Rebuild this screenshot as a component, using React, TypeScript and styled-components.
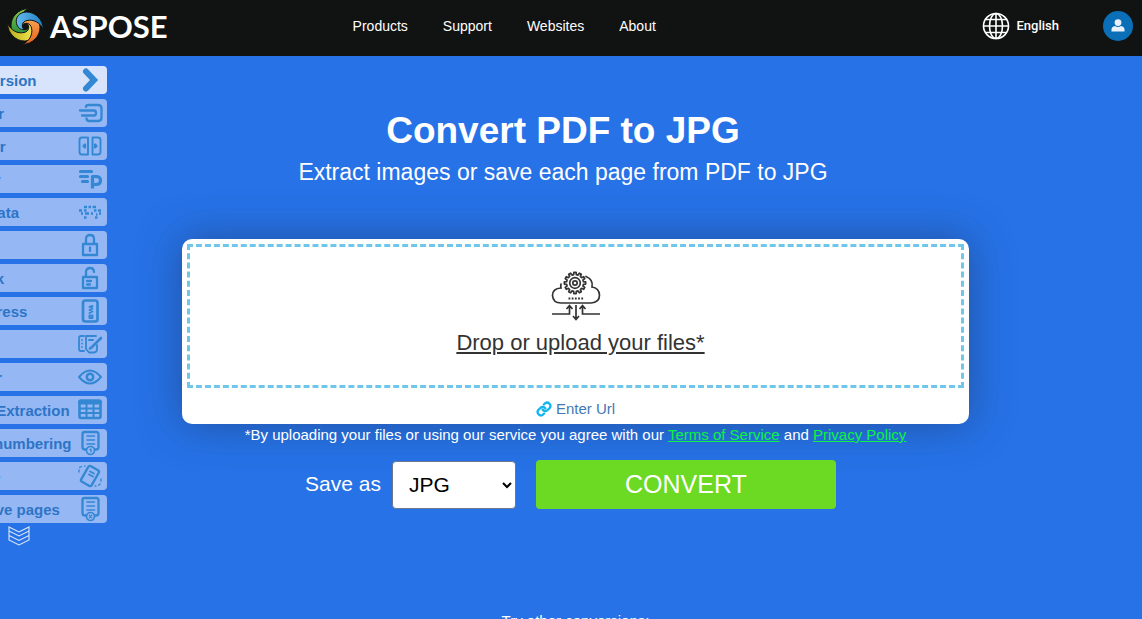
import React from "react";
import styled, { createGlobalStyle } from "styled-components";

const GlobalStyle = createGlobalStyle`
  * { box-sizing: border-box; }
  html { scrollbar-width: none; }
  body {
    margin: 0;
    background: #2672e6;
    color: #fff;
    font-family: "Liberation Sans", Arial, sans-serif;
    font-size: 14px;
    overflow-x: hidden;
  }
`;

const Header = styled.header`
  display: flex;
  align-items: center;
  height: 56px;
  padding: 0 9px 4px 7px;
  background: #111312;
`;

const Logo = styled.a`
  display: flex;
  align-items: center;
  gap: 6px;
  color: #fff;
  text-decoration: none;
  font-family: Lato, sans-serif;
  font-size: 31px;
  font-weight: 700;
  line-height: 36px;
`;

const Nav = styled.nav`
  display: flex;
  gap: 35px;
  margin-left: 185px;
`;

const NavLink = styled.a`
  color: #fff;
  text-decoration: none;
  line-height: 20px;
`;

const Language = styled.button`
  display: flex;
  align-items: center;
  gap: 7px;
  margin-left: auto;
  padding: 0;
  border: 0;
  background: none;
  color: #fff;
  font: 500 13px/20px Roboto, sans-serif;
`;

const Account = styled.button`
  display: grid;
  place-items: center;
  width: 30px;
  height: 30px;
  margin-left: 44px;
  padding: 0;
  border: 0;
  border-radius: 50%;
  background: #0a6fb7;
`;

const Sidebar = styled.nav`
  position: fixed;
  top: 66px;
  left: -56px;
  z-index: 2;
  display: flex;
  flex-direction: column;
  gap: 5px;
  width: 163px;
`;

const SideLink = styled.a<{ $active?: boolean }>`
  display: flex;
  align-items: center;
  justify-content: space-between;
  height: 28px;
  padding: 0 4px 0 10px;
  border-radius: 4px;
  background: ${(p) => (p.$active ? "#d7e4fb" : "#95b8f4")};
  color: #2d74c6;
  font-size: 15px;
  font-weight: 700;
  line-height: 20px;
  white-space: nowrap;
  text-decoration: none;
`;

const SideLabel = styled.span`
  padding-top: 2px;
`;

const SideIcon = styled.svg`
  flex: none;
  width: 26px;
  height: 26px;
  fill: none;
  stroke: #3487d3;
  stroke-width: 2.3;
  stroke-linecap: round;
  stroke-linejoin: round;
`;

const More = styled.button`
  align-self: flex-start;
  display: block;
  margin: -2px 0 0 64px;
  padding: 0;
  border: 0;
  background: none;
  line-height: 0;
`;

const Main = styled.main`
  display: flex;
  flex-direction: column;
  align-items: center;
  padding: 51px 0 24px 9px;
`;

const Intro = styled.div`
  padding-right: 25px;
  text-align: center;
`;

const Title = styled.h1`
  margin: 0;
  font-size: 37px;
  font-weight: 700;
  line-height: 48px;
`;

const Subtitle = styled.h2`
  margin: 0;
  font-size: 23px;
  font-weight: 400;
  line-height: 34px;
`;

const Card = styled.section`
  width: 100%;
  max-width: 787px;
  margin-top: 50px;
  padding: 5px;
  border-radius: 10px;
  background: #fff;
  box-shadow: 0 0 40px rgba(30, 50, 90, 0.5);
  text-align: center;
`;

const DropZone = styled.button`
  display: flex;
  flex-direction: column;
  align-items: center;
  width: 100%;
  height: 144px;
  padding: 24px 0 0;
  border: 3px dashed #6ec6ea;
  background: #fff;
  color: #333;
  font: 400 22px/28px "Liberation Sans", Arial, sans-serif;
`;

const DropLabel = styled.span`
  margin-top: 8px;
  padding-left: 10px;
  text-decoration: underline;
`;

const UrlRow = styled.div`
  display: flex;
  justify-content: center;
  height: 31px;
  padding-top: 11px;
`;

const UrlLink = styled.a`
  display: flex;
  align-items: center;
  gap: 4px;
  color: #4379b5;
  font-size: 15px;
  line-height: 20px;
  text-decoration: none;
`;

const Terms = styled.p`
  margin: 0;
  font-size: 15px;
  line-height: 22px;
  a { color: #0cf443; }
`;

const SaveRow = styled.form`
  display: flex;
  align-items: center;
  margin-top: 14px;
  padding-right: 10px;
  font-size: 21px;
  label { padding-bottom: 2px; }
`;

const FormatSelect = styled.select`
  width: 124px;
  height: 48px;
  margin: 0 20px 0 11px;
  padding: 0 0 0 12px;
  border: 1px solid #6b7690;
  border-radius: 4px;
  background: #fff;
  color: #000;
  font: 400 21px "Liberation Sans", Arial, sans-serif;
`;

const ConvertButton = styled.button`
  width: 300px;
  height: 49px;
  padding: 0;
  border: 0;
  border-radius: 4px;
  background: #6cd923;
  color: #fff;
  font: 400 25px "Liberation Sans", Arial, sans-serif;
`;

const Other = styled.p`
  margin: 101px 0 0;
  font-size: 15px;
  line-height: 22px;
`;

const blade = "M18 3C17.500 -7 10 -14.500 1 -14.500C-6 -14.500 -10.500 -9 -9 -3C-8 1 -5 3.500 -1.500 3C-4.500 0 -3.500 -5 1.500 -6C8 -7.500 14.500 -4 18 3Z";

const Swirl = () => (
  <svg width="37" height="37" viewBox="-18.5 -18.5 37 37" aria-hidden="true">
    <defs>
      {[
        ["green", "#1f8a3c", "#8ccb4a"],
        ["blue", "#67b9ee", "#1d7fc4"],
        ["orange", "#f7a552", "#e8641f"],
        ["yellow", "#f3e94f", "#b9ac1c"],
      ].map(([id, a, b]) => (
        <linearGradient key={id} id={id}>
          <stop offset="0" stopColor={a} />
          <stop offset="1" stopColor={b} />
        </linearGradient>
      ))}
    </defs>
    <g stroke="#111312" strokeWidth="1">
      <path d={blade} fill="url(#green)" transform="rotate(-90)" />
      <path d={blade} fill="url(#yellow)" transform="rotate(180)" />
      <path d={blade} fill="url(#orange)" transform="rotate(90)" />
      <path d={blade} fill="url(#blue)" />
    </g>
  </svg>
);

const page = (
  <>
    <path d="M18 19.500H19Q21.500 19.500 21.500 17V4Q21.500 2 19.500 2H7.500Q5.500 2 5.500 4V17Q5.500 19.500 8 19.500H9" />
    <path d="M10 6H17.500M10 10H17.500M10 14H17.500" strokeWidth="1.600" />
    <circle cx="13.500" cy="20.500" r="4" strokeWidth="1.700" />
  </>
);

const tools: { name: string; icon: React.ReactNode }[] = [
  { name: "Conversion", icon: <path d="M9 4.500L17 13L9 21.500" strokeWidth="6" strokeLinejoin="miter" /> },
  { name: "Merger", icon: <path d="M9 7Q9 5 11.500 5H21Q24.500 5 24.500 8.500V17.500Q24.500 21 21 21H12.500Q9.500 21 9.500 18.500M3 10.500H17Q19 10.500 19 13Q19 15.500 17 15.500H5" /> },
  { name: "Splitter", icon: <><path d="M10 4.500H5Q2.500 4.500 2.500 7V19Q2.500 21.500 5 21.500H10M16 4.500H21Q23.500 4.500 23.500 7V19Q23.500 21.500 21 21.500H16M11 4.500V21.500M15.500 4.500V21.500" strokeWidth="1.900" /><path d="M8 11.500V14.500L6.500 13ZM18 11.500V14.500L19.500 13Z" /></> },
  { name: "Parser", icon: <><path d="M3.500 5.500H14.500M3.500 10.500H10.500M5.500 15.500H10.500" strokeWidth="3.200" /><path d="M15.500 22.500V10.500H19Q23.500 10.500 23.500 14.500Q23.500 18.500 19 18.500H15.500" strokeWidth="3.200" strokeLinecap="butt" /></> },
  { name: "Metadata", icon: <path d="M7 8H10M11.500 8H14M15.500 8H19M2 11.500H5M7 11.500H9.500M17 11.500H19.500M21 11.500H24M4 14.500H6M8 14.500H12M14 14.500H16M22 14.500H24M7 18.500H9.500M18 18.500H20.500M19 15.500H20.500" strokeWidth="2.700" strokeLinecap="butt" /> },
  { name: "Lock", icon: <path d="M6 12H20V23H6ZM9 12V7Q9 3 13 3Q17 3 17 7V12M13 15.500V19" /> },
  { name: "Unlock", icon: <path d="M6 12H20V23H6ZM9 12V7Q9 3 13 3Q17 3 17 7M10 16H14M10 19.500H13" /> },
  { name: "Compress", icon: <><rect x="6" y="2.500" width="14.500" height="21" rx="2.500" strokeWidth="2.700" /><path d="M15.500 8L12.500 9L15.500 10.500L12.500 12L15.500 13.500L12.500 15M12.500 17.500H15.500V20H12.500Z" strokeWidth="1.900" /></> },
  { name: "Editor", icon: <><path d="M7 5H4Q2 5 2 7V18Q2 20 4 20H7M5 9V9.100M5 12.500V12.600M5 16V16.100M19 5H9V18L12 21.500H17Q20 21.500 20 18V14M12 9H16" strokeWidth="1.800" /><path d="M24 7L15 16L13 17.500" strokeWidth="2.600" /></> },
  { name: "Viewer", icon: <><path d="M2 13Q13 0 24 13Q13 26 2 13Z" strokeWidth="2" /><circle cx="13" cy="13" r="3.200" strokeWidth="2.500" /></> },
  { name: "Table Extraction", icon: <><rect x="2.500" y="3.500" width="21" height="17.500" rx="1.500" strokeWidth="2.600" /><path d="M3 5.500H23" strokeWidth="4" /><path d="M3 11.500H23M3 16H23M9.500 7V20.500M16.500 7V20.500" strokeWidth="2" /></> },
  { name: "Page numbering", icon: <>{page}<path d="M13 19.500L14 19V22" strokeWidth="1.300" /></> },
  { name: "Rotate", icon: <><rect x="7" y="4" width="12" height="18" rx="2" transform="rotate(30 13 13)" /><path d="M13 8.500L17 10.500M12 11.500L16 13.500" strokeWidth="1.900" /><path d="M2 9V5Q4 3 8 3M24 16V19Q23 23 18 23" strokeWidth="1.400" strokeDasharray="2 3" /></> },
  { name: "Remove pages", icon: <>{page}<path d="M12.300 19.300L14.700 21.700M14.700 19.300L12.300 21.700" strokeWidth="1.300" /></> },
];

const Globe = () => (
  <svg width="28" height="28" viewBox="0 0 28 28" fill="none" stroke="#fff" strokeWidth="1.600" aria-hidden="true">
    <circle cx="14" cy="14" r="12.500" />
    <ellipse cx="14" cy="14" rx="6.500" ry="12.500" />
    <path d="M14 1V27M1 14H27M3.500 7.500H24.500M3.500 20.500H24.500" />
  </svg>
);

const gear = Array.from({ length: 12 }, (_, i) => {
  const at = (r: number, deg: number) => {
    const a = ((i * 30 + deg) * Math.PI) / 180;
    return `${(24 + r * Math.cos(a)).toFixed(2)} ${(12 + r * Math.sin(a)).toFixed(2)}`;
  };
  return `${i ? "L" : "M"}${at(8.5, -9)}L${at(10.7, -6)}L${at(10.7, 6)}L${at(8.5, 9)}`;
}).join("") + "Z";

const CloudIcon = () => (
  <svg width="50" height="50" viewBox="0 0 50 50" fill="none" stroke="#333" strokeWidth="1.700" aria-hidden="true">
    <path d={gear} strokeLinejoin="round" />
    <circle cx="24" cy="12" r="5.300" />
    <circle cx="24" cy="12" r="2.200" />
    <path d="M10 13Q9.500 15 10 17Q1.500 17.500 1.500 24.500Q2 32 10 32H40Q48.500 31.500 48.500 24Q48 17 41 16Q42.500 8.500 35 5.500" strokeLinecap="round" />
    <path d="M17.500 27.500H32.500" strokeWidth="2" strokeDasharray="1.800 1.400" />
    <path d="M1 43H18.500V35M15.500 38L18.500 34.500L21.500 38M49 43H31.500V35M28.500 38L31.500 34.500L34.500 38M25 34V48M22 45L25 48.500L28 45" />
  </svg>
);

export default function App() {
  return (
    <>
      <GlobalStyle />
      <Header>
        <Logo href="#"><Swirl />ASPOSE</Logo>
        <Nav>
          {["Products", "Support", "Websites", "About"].map((t) => (
            <NavLink key={t} href="#">{t}</NavLink>
          ))}
        </Nav>
        <Language type="button"><Globe />English</Language>
        <Account type="button" aria-label="Account">
          <svg width="14" height="14" viewBox="0 0 14 14" fill="#e9f1fd">
            <circle cx="7" cy="3.600" r="3.400" />
            <path d="M0.500 12.500V10.500Q0.500 7.500 4 7Q7 9 10 7Q13.500 7.500 13.500 10.500V12.500Z" />
          </svg>
        </Account>
      </Header>
      <Sidebar aria-label="Tools">
        {tools.map((t, i) => (
          <SideLink key={t.name} href="#" $active={i === 0}>
            <SideLabel>{t.name}</SideLabel>
            <SideIcon viewBox="0 0 26 26" aria-hidden="true">{t.icon}</SideIcon>
          </SideLink>
        ))}
        <More type="button" aria-label="More tools">
          <svg width="22" height="20" viewBox="0 0 22 20" fill="none" stroke="#dce8fc" strokeWidth="1.100">
            <path d="M1 1L11 6L21 1V5L11 10L1 5ZM1 5V9.500L11 14.500L21 9.500V5M1 9.500V14L11 19L21 14V9.500" />
          </svg>
        </More>
      </Sidebar>
      <Main>
        <Intro>
          <Title>Convert PDF to JPG</Title>
          <Subtitle>Extract images or save each page from PDF to JPG</Subtitle>
        </Intro>
        <Card>
          <DropZone type="button">
            <CloudIcon />
            <DropLabel>Drop or upload your files*</DropLabel>
          </DropZone>
          <UrlRow>
            <UrlLink href="#">
              <svg width="16" height="16" viewBox="0 0 24 24" fill="none" stroke="#12b5f0" strokeWidth="3.500" strokeLinecap="round" aria-hidden="true">
                <path d="M10 13a5 5 0 0 0 7.500.5l3-3a5 5 0 0 0-7-7l-1.700 1.700" />
                <path d="M14 11a5 5 0 0 0-7.500-.5l-3 3a5 5 0 0 0 7 7l1.700-1.700" />
              </svg>
              Enter Url
            </UrlLink>
          </UrlRow>
        </Card>
        <Terms>
          *By uploading your files or using our service you agree with our{" "}
          <a href="#">Terms of Service</a> and <a href="#">Privacy Policy</a>
        </Terms>
        <SaveRow onSubmit={(e) => e.preventDefault()}>
          <label htmlFor="format">Save as</label>
          <FormatSelect id="format" defaultValue="JPG">
            <option>JPG</option>
          </FormatSelect>
          <ConvertButton type="submit">CONVERT</ConvertButton>
        </SaveRow>
        <Other>Try other conversions:</Other>
      </Main>
    </>
  );
}
